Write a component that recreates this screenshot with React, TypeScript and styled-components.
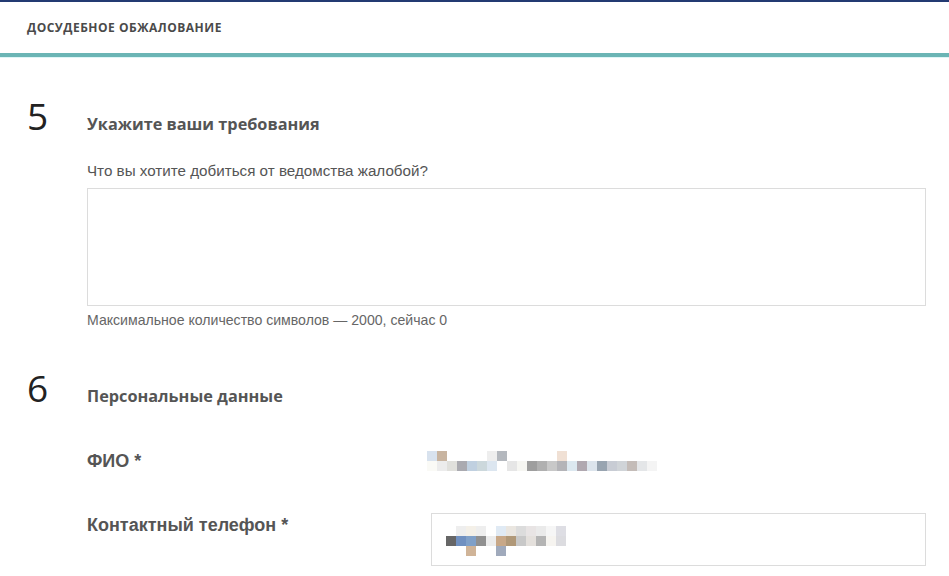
import React from 'react';
import styled, { createGlobalStyle } from 'styled-components';

const GlobalStyle = createGlobalStyle`
  * { box-sizing: border-box; }
  body {
    margin: 0;
    background: #fff;
    font-family: "Liberation Sans", Arial, sans-serif;
    color: #555;
  }
`;

type Cell = [number, number, string];

// blurred personal data, drawn as a mosaic of 10px cells
const fioCells: Cell[] = [
  [0, 0, '#d8e2ee'], [1, 0, '#c8b4a0'], [6, 0, '#eeeeee'], [7, 0, '#b4b8be'], [13, 0, '#f0e0d4'],
  [0, 1, '#fafaf6'], [1, 1, '#ececec'], [2, 1, '#e0e0dc'], [3, 1, '#aaaab0'], [4, 1, '#c0d0e0'],
  [5, 1, '#ccd8dc'], [6, 1, '#dce6f0'], [8, 1, '#e6e6e6'], [9, 1, '#f6f6f2'], [10, 1, '#9e9e9e'],
  [11, 1, '#b0b0b0'], [12, 1, '#c8c8c8'], [13, 1, '#b4b4b8'], [14, 1, '#dce8f0'], [15, 1, '#b0a8b0'],
  [16, 1, '#dce4ec'], [17, 1, '#98a4b0'], [18, 1, '#c8ccd4'], [19, 1, '#d0d4d8'], [20, 1, '#c4bcb8'],
  [21, 1, '#e4e6e8'], [22, 1, '#f4f4f4'],
];

const phoneCells: Cell[] = [
  [1, 0, '#eeeeee'], [2, 0, '#f4f0e8'], [3, 0, '#eeeeee'], [5, 0, '#e0eaf4'], [6, 0, '#eae6e0'],
  [7, 0, '#dcdcdc'], [8, 0, '#e8e4e4'], [9, 0, '#eaeaea'], [10, 0, '#f6f6f6'], [11, 0, '#dedee4'],
  [0, 1, '#666666'], [1, 1, '#7090c0'], [2, 1, '#80a0c8'], [3, 1, '#909090'], [4, 1, '#ececec'],
  [5, 1, '#c8a888'], [6, 1, '#b09878'], [7, 1, '#c8c8c8'], [8, 1, '#e4e0dc'], [9, 1, '#b4b4b4'],
  [10, 1, '#f6f4f0'], [11, 1, '#dcdce0'],
  [2, 2, '#d0b498'], [5, 2, '#a0aabc'],
];

const Mosaic = ({ cells }: { cells: Cell[] }) => {
  const cols = Math.max(...cells.map(c => c[0])) + 1;
  const rows = Math.max(...cells.map(c => c[1])) + 1;
  return (
    <svg width={cols * 10} height={rows * 10} viewBox={`0 0 ${cols * 10} ${rows * 10}`}>
      {cells.map(([x, y, fill]) => (
        <rect key={`${x}-${y}`} x={x * 10} y={y * 10} width="10" height="10" fill={fill} />
      ))}
    </svg>
  );
};

const App = () => {
  return (
    <>
      <GlobalStyle />
      <Header>
        <HeaderTitle>Досудебное обжалование</HeaderTitle>
      </Header>
      <Main>
        <Section $top={55}>
          <StepNumber>5</StepNumber>
          <SectionBody>
            <SectionTitle>Укажите ваши требования</SectionTitle>
            <FieldLabel>Что вы хотите добиться от ведомства жалобой?</FieldLabel>
            <TextArea />
            <Hint>Максимальное количество символов — 2000, сейчас 0</Hint>
          </SectionBody>
        </Section>

        <Section $top={56}>
          <StepNumber>6</StepNumber>
          <SectionBody>
            <SectionTitle>Персональные данные</SectionTitle>
            <FormRow $top={42}>
              <RowLabel>ФИО *</RowLabel>
              <StaticValue>
                <Mosaic cells={fioCells} />
              </StaticValue>
            </FormRow>
            <FormRow $top={42}>
              <RowLabel>Контактный телефон *</RowLabel>
              <InputBox>
                <Mosaic cells={phoneCells} />
              </InputBox>
            </FormRow>
          </SectionBody>
        </Section>
      </Main>
    </>
  );
};

const Header = styled.header`
  display: flex;
  align-items: center;
  height: 57px;
  padding: 0 27px;
  border-top: 2px solid #233a72;
  border-bottom: 4px solid #6bb5b5;
  box-shadow: 0 1px 0 #def6f6;
`;

const HeaderTitle = styled.h2`
  margin: 0;
  font-family: "Open Sans", sans-serif;
  font-size: 12px;
  font-weight: 700;
  text-transform: uppercase;
  color: #4a4a4a;
  letter-spacing: 0.5px;
`;

const Main = styled.main`
  padding: 0 23px 0 27px;
`;

const Section = styled.section<{ $top: number }>`
  display: grid;
  grid-template-columns: 60px 1fr;
  margin-top: ${p => p.$top}px;
`;

const StepNumber = styled.div`
  font-family: "Open Sans", sans-serif;
  font-size: 37px;
  font-weight: 400;
  line-height: 40px;
  color: #222;
  margin-top: -16px;
`;

const SectionBody = styled.div`
  display: flex;
  flex-direction: column;
`;

const SectionTitle = styled.h3`
  margin: 0;
  font-family: "Open Sans", sans-serif;
  font-size: 16.3px;
  font-weight: 700;
  line-height: 24px;
  color: #555;
`;

const FieldLabel = styled.label`
  margin-top: 26px;
  font-size: 15.2px;
  line-height: 18px;
  color: #555;
`;

const TextArea = styled.textarea`
  display: block;
  margin-top: 8px;
  width: 100%;
  height: 118px;
  border: 1px solid #dcdcdc;
  resize: none;
  outline: none;
`;

const Hint = styled.p`
  margin: 6px 0 0;
  font-size: 14.1px;
  line-height: 16px;
  color: #666;
`;

const FormRow = styled.div<{ $top: number }>`
  display: grid;
  grid-template-columns: 340px 1fr;
  margin-top: ${p => p.$top}px;
`;

const RowLabel = styled.div`
  font-size: 18px;
  font-weight: 700;
  line-height: 22px;
  color: #555;
`;

const StaticValue = styled.div`
  display: flex;
  align-items: center;
  height: 22px;
`;

const InputBox = styled.div`
  display: flex;
  align-items: center;
  margin: -1px 0 0 4px;
  height: 53px;
  padding: 0 0 0 14px;
  border: 1px solid #dcdcdc;

  svg { margin-top: 3px; }
`;

export default App;
